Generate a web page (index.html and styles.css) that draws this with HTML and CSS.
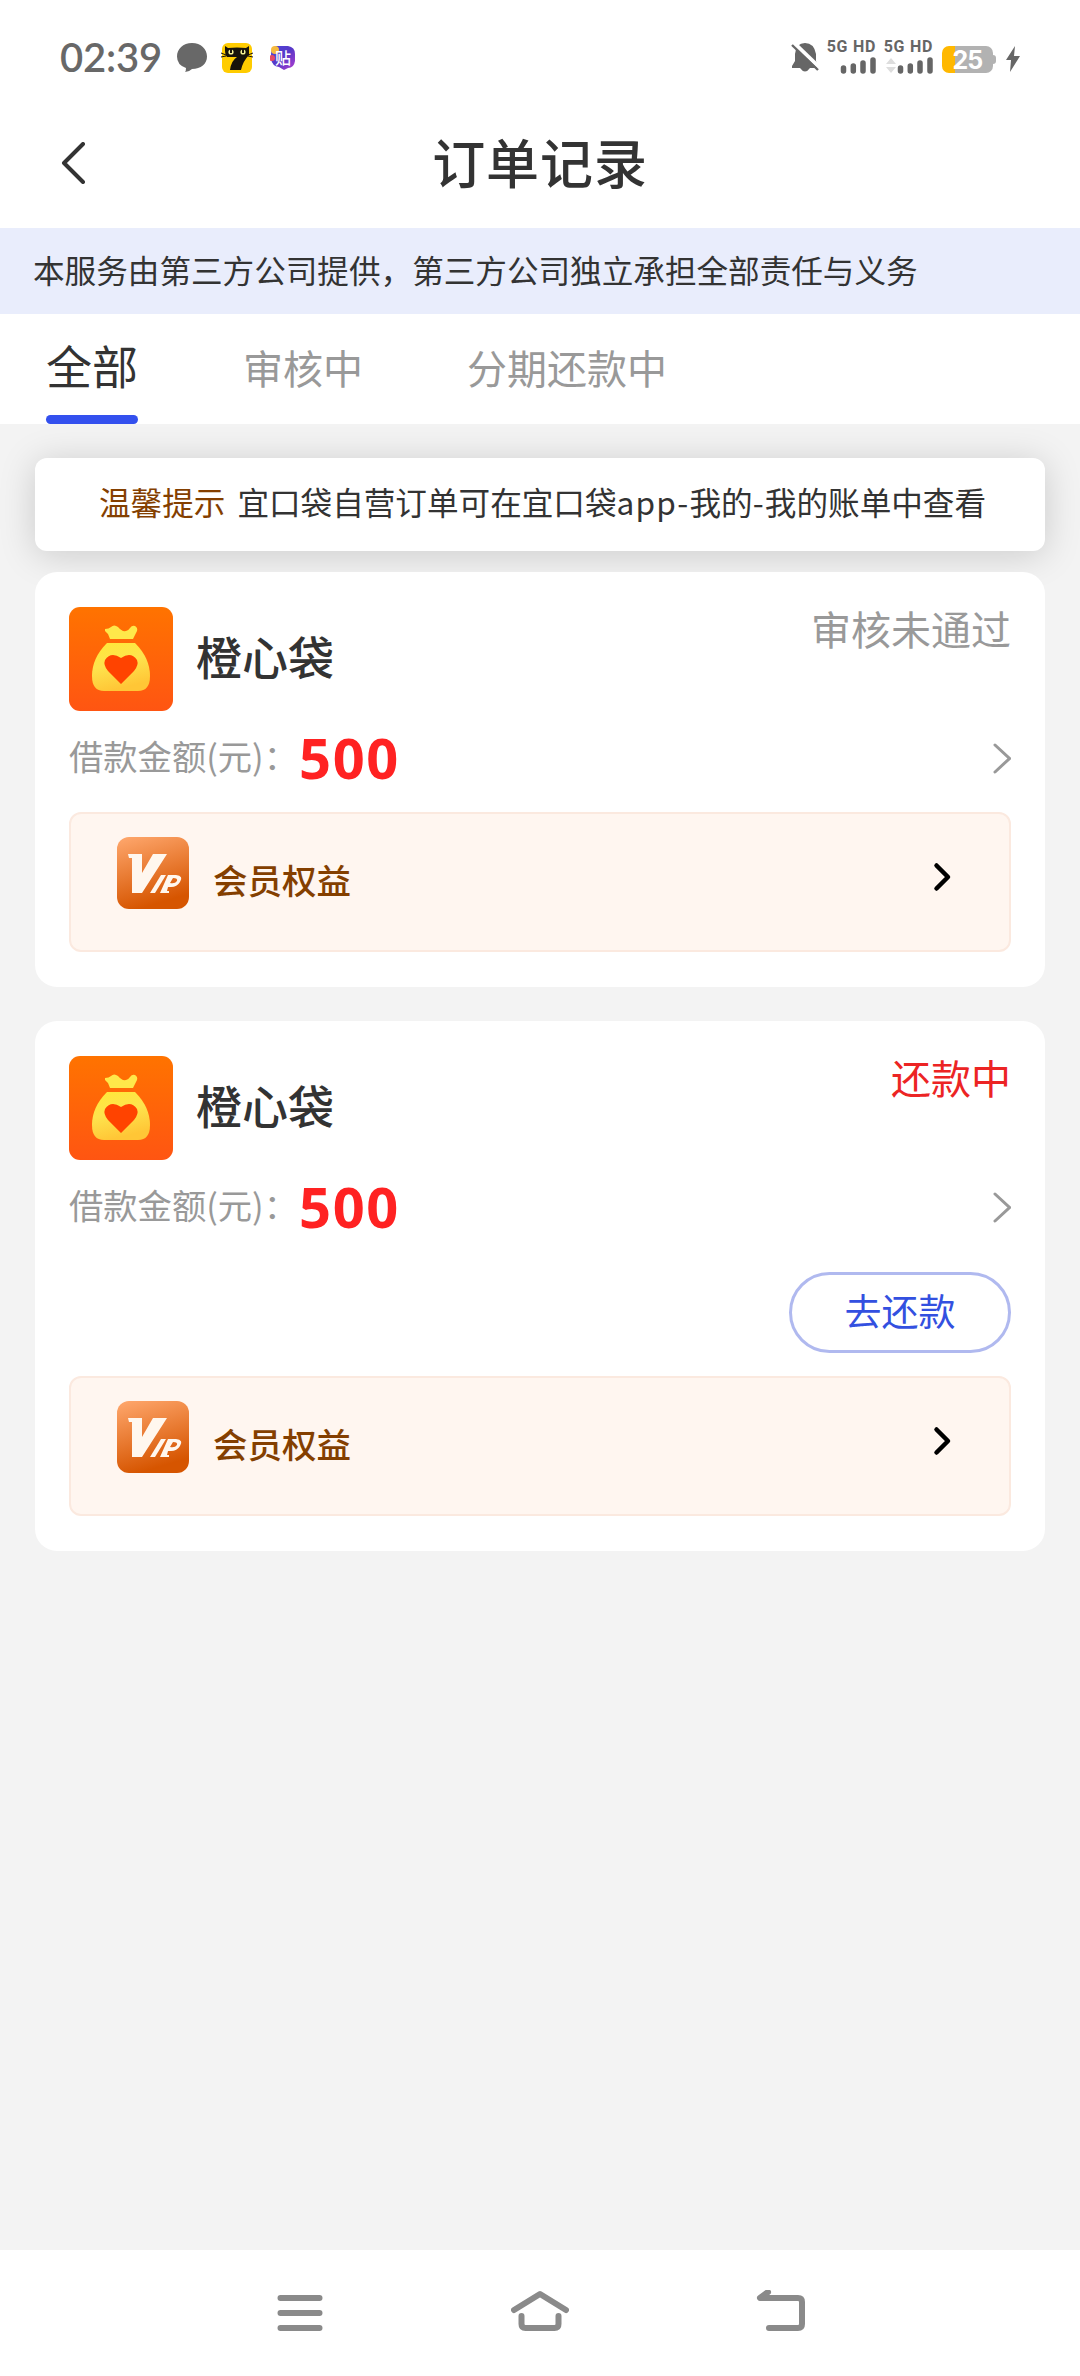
FILE: index.html
```html
<!DOCTYPE html>
<html lang="zh-CN">
<head>
<meta charset="utf-8">
<title>订单记录</title>
<link rel="stylesheet" href="styles.css">
</head>
<body>
<svg class="defs" width="0" height="0">
  <defs>
    <linearGradient id="orange" x1="0" y1="0" x2="0" y2="1"><stop offset="0" stop-color="#ff7300"/><stop offset="1" stop-color="#ff5512"/></linearGradient>
    <linearGradient id="gold" x1="0" y1="0" x2=".3" y2="1"><stop offset="0" stop-color="#ffe838"/><stop offset=".5" stop-color="#fee34d"/><stop offset="1" stop-color="#ffc636"/></linearGradient>
    <linearGradient id="copper" x1="0" y1="0" x2=".3" y2="1"><stop offset="0" stop-color="#ffa86e"/><stop offset="1" stop-color="#d65500"/></linearGradient>
    <linearGradient id="violet" x1="0" y1="0" x2="1" y2="1"><stop offset="0" stop-color="#4b45d8"/><stop offset=".5" stop-color="#5938c8"/><stop offset="1" stop-color="#b13fd0"/></linearGradient>
    <symbol id="bag" viewBox="0 0 104 104">
      <rect width="104" height="104" rx="11" fill="url(#orange)"/>
      <path d="M36 22q4 0 6-2 3-3 7 0 4 5 8 4 2 0 4-3 2-3 5-2 3 2 2 5l-4 8H41l-2-5-3-3z" fill="#ffe84a"/>
      <path d="M38 36h28q15 15 15 33 0 15-12 15H35q-12 0-12-15 0-18 15-33z" fill="url(#gold)"/>
      <path d="M52 77 39 64q-5-6-3-11 6-9 16-2 10-7 16 2 2 5-3 11z" fill="#ff4300"/>
    </symbol>
    <symbol id="vip" viewBox="0 0 72 72">
      <rect width="72" height="72" rx="12" fill="url(#copper)"/>
      <path d="M11 17h14v19l11-19h14L25 56H15V21h-3z" fill="#fff7ee"/>
      <path d="M44 38h5L38 56h-5z" fill="#fff7ee"/>
      <path d="M51 38h8q8 1 4 7-3 5-9 5h-3l-1 4h2v2h-9zM56 41l-3 5q5 1 7-2 1-3-4-3z" fill="#fff7ee" fill-rule="evenodd"/>
    </symbol>
  </defs>
</svg>
<div class="screen">
  <header class="status">
    <div class="status-left">
      <span class="clock">02:39</span>
      <svg class="bubble" width="30" height="30" viewBox="0 0 30 30"><path d="M15 0c9 0 15 6 15 13.500S24 26 15 26q-3 3-7 3 1-1 1-4Q0 22 0 13.500C0 6 6 0 15 0z" fill="#686868"/></svg>
      <svg class="cat" width="32" height="30" viewBox="0 0 32 30">
        <rect x="1" width="30" height="30" rx="6" fill="#fc0"/>
        <path d="M4 3l3 2q9-1 18 0l3-2v9q-6 6-8 15H9q1-9 7-13H6q-2-2-2-6z" fill="#17130a"/>
        <path d="M0 10l5 2M0 14l5-1M32 10l-5 2M32 14l-5-1" stroke="#17130a"/>
        <circle cx="10" cy="9" r="2.600" fill="#f3ef91"/><circle cx="22" cy="9" r="2.600" fill="#f3ef91"/>
        <path d="M10 6v4M22 6v4" stroke="#17130a" stroke-width="2"/>
      </svg>
      <span class="sticker">
        <svg width="26" height="26" viewBox="0 0 26 26"><path d="M6 1h12q7 1 7 8v7q-1 7-7 7l-4 2-5-3q-7-1-8-8V9q0-7 5-8z" fill="url(#violet)"/><circle cx="5" cy="5" r="4" fill="#f6bb3e"/><circle cx="2" cy="13" r="3" fill="#e54a66"/></svg>
        <span class="sticker-text">贴</span>
      </span>
    </div>
    <div class="status-right">
      <svg class="bell" width="28" height="32" viewBox="0 0 28 32"><path d="M4 12Q5 1 14 1t11 11v7l2 5v2h-8q-5 7-10 0H1v-2l3-5z" fill="#666"/><path d="M2 0l28 27" stroke="#fff" stroke-width="4"/><path d="M1 3l26 25" stroke="#666" stroke-width="2.400"/></svg>
      <div class="signal"><span>5G HD</span><svg width="36" height="17" viewBox="0 0 36 17"><path d="M3.500 11v3M13.300 9v5M23 6v8M33 3v11" stroke="#666" stroke-width="5.500" stroke-linecap="round"/></svg></div>
      <div class="signal"><span>5G HD</span><svg width="48" height="17" viewBox="0 0 48 17"><path d="M1 7l5-6 5 6zM1 10h10l-5 6z" fill="#ddd"/><path d="M15.500 11v3M25.300 9v5M35 6v8M45 3v11" stroke="#666" stroke-width="5.500" stroke-linecap="round"/></svg></div>
      <div class="battery"><span>25</span></div>
      <svg class="bolt" width="14" height="26" viewBox="0 0 14 26"><path d="M9 0 0 14h5L4 26l10-16H8z" fill="#666"/></svg>
    </div>
  </header>

  <nav class="titlebar">
    <svg class="back" width="25" height="42" viewBox="0 0 25 42"><path d="M22 2 3 21l19 19" fill="none" stroke="#333" stroke-width="4" stroke-linecap="round" stroke-linejoin="round"/></svg>
    <h1>订单记录</h1>
  </nav>

  <p class="banner">本服务由第三方公司提供，第三方公司独立承担全部责任与义务</p>

  <div class="tabs">
    <span class="tab active">全部</span>
    <span class="tab">审核中</span>
    <span class="tab">分期还款中</span>
  </div>

  <main>
    <div class="notice"><span class="tip">温馨提示</span><span>宜口袋自营订单可在宜口袋<span class="latin">app-</span>我的<span class="latin">-</span>我的账单中查看</span></div>

    <section class="card">
      <div class="card-head">
        <svg width="104" height="104"><use href="#bag"/></svg>
        <h2>橙心袋</h2>
        <span class="state">审核未通过</span>
      </div>
      <div class="amount">
        <span class="label">借款金额(元)：</span><b>500</b>
        <svg class="more" width="19" height="31" viewBox="0 0 19 31"><path d="M3 2 17.500 15.500 3 29" fill="none" stroke="#999" stroke-width="3" stroke-linecap="round"/></svg>
      </div>
      <div class="vip">
        <svg width="72" height="72"><use href="#vip"/></svg>
        <span>会员权益</span>
        <svg class="go" width="20" height="30" viewBox="0 0 20 30"><path d="M4.500 3.500 16 15 4.500 26.500" fill="none" stroke="#000" stroke-width="4.500" stroke-linecap="round" stroke-linejoin="round"/></svg>
      </div>
    </section>

    <section class="card">
      <div class="card-head">
        <svg width="104" height="104"><use href="#bag"/></svg>
        <h2>橙心袋</h2>
        <span class="state repaying">还款中</span>
      </div>
      <div class="amount">
        <span class="label">借款金额(元)：</span><b>500</b>
        <svg class="more" width="19" height="31" viewBox="0 0 19 31"><path d="M3 2 17.500 15.500 3 29" fill="none" stroke="#999" stroke-width="3" stroke-linecap="round"/></svg>
      </div>
      <button class="repay">去还款</button>
      <div class="vip">
        <svg width="72" height="72"><use href="#vip"/></svg>
        <span>会员权益</span>
        <svg class="go" width="20" height="30" viewBox="0 0 20 30"><path d="M4.500 3.500 16 15 4.500 26.500" fill="none" stroke="#000" stroke-width="4.500" stroke-linecap="round" stroke-linejoin="round"/></svg>
      </div>
    </section>
  </main>

  <footer class="navbar">
    <svg width="46" height="46" viewBox="0 0 46 46"><path d="M3.500 8h39M3.500 23h39M3.500 38h39"/></svg>
    <svg width="58" height="46" viewBox="0 0 58 46"><path d="M3 20 29 4l26 16M10.500 26v8q0 4 4 4h29q4 0 4-4v-8"/></svg>
    <svg width="50" height="46" viewBox="0 0 50 46"><path d="M12 2 4 8h38q4 0 4 4v22q0 4-4 4H13"/></svg>
  </footer>
</div>
</body>
</html>
```
FILE: styles.css
```css
* { box-sizing: border-box; }
body { margin: 0; background: #f3f3f3; color: #333; font-family: "Noto Sans CJK SC", sans-serif; }
h1, h2, p { margin: 0; }
svg { display: block; flex: none; }
.defs { position: absolute; }
.screen { width: 1080px; height: 2376px; display: flex; flex-direction: column; }

.status { height: 114px; background: #fff; display: flex; justify-content: space-between; padding: 0 60px; }
.status-left { display: flex; align-items: flex-start; padding-top: 43px; }
.clock { width: 117px; font: 600 40px/29px Lato, sans-serif; letter-spacing: -.2px; color: #686868; white-space: nowrap; }
.cat { margin-left: 14px; }
.sticker { position: relative; margin: 2px 0 0 17px; }
.sticker-text { position: absolute; left: 5px; top: 4px; font-size: 16px; line-height: 16px; font-weight: 500; color: #fff; }
.status-right { display: flex; align-items: flex-start; padding-top: 40px; color: #666; }
.bell { margin: 2px 9px 0 0; }
.signal { display: flex; flex-direction: column; align-items: flex-end; width: 48px; margin-right: 9px; font: 700 16px/14px Roboto, sans-serif; letter-spacing: .7px; white-space: nowrap; }
.signal svg { margin-top: 3px; }
.battery { position: relative; width: 51px; height: 27px; margin: 6px 13px 0 0; border-radius: 7px; background: linear-gradient(90deg, #ffb800 13px, #b2b2b2 13px); font: 700 25px/28px Inter, sans-serif; letter-spacing: -.8px; color: #fff; text-align: center; }
.battery::after { content: ""; position: absolute; right: -3px; top: 9px; width: 3px; height: 9px; border-radius: 0 3px 3px 0; background: #b2b2b2; }
.bolt { margin-top: 6px; }

.titlebar { position: relative; height: 114px; background: #fff; display: flex; justify-content: center; }
.titlebar h1 { font-size: 53px; line-height: 95px; font-weight: 500; letter-spacing: .9px; }
.back { position: absolute; left: 61px; top: 28px; }

.banner { height: 86px; padding-left: 33px; background: #e9edfc; font-size: 31.600px; line-height: 83px; }
.tabs { height: 110px; background: #fff; display: flex; padding-left: 46px; }
.tab { margin-right: 104px; font-size: 40px; line-height: 107px; color: #999; }
.tab.active { display: flex; flex-direction: column; height: 110px; margin-right: 105px; font-size: 46px; line-height: 101px; color: #333; }
.tab.active::after { content: ""; height: 9px; border-radius: 5px; background: #3350ee; }

main { flex: 1; padding: 34px 35px 0; }
.notice { height: 93px; padding-left: 64px; display: flex; gap: 12px; background: #fff; border-radius: 12px; box-shadow: 0 4px 36px rgba(0,0,0,.17); font-size: 31.600px; line-height: 87px; white-space: nowrap; }
.tip { color: #843f00; }
.latin { letter-spacing: 1.200px; }
.card { position: relative; margin: 21px 0 34px; padding: 35px 34px; background: #fff; border-radius: 22px; }
.card + .card { margin-top: 0; }
.card-head { display: flex; height: 104px; }
.card-head h2 { margin-left: 23px; font-size: 46px; line-height: 97px; font-weight: 500; }
.state { margin-left: auto; font-size: 40px; line-height: 42px; color: #999; }
.repaying { color: #ec2424; }
.amount { display: flex; align-items: center; height: 94px; margin-bottom: 7px; }
.label { width: 230px; font-size: 34.300px; line-height: 93px; padding-bottom: 5px; color: #999; white-space: nowrap; }
.amount b { font-family: "Noto Sans", sans-serif; font-size: 56px; letter-spacing: 1.600px; line-height: 92px; padding-bottom: 2px; color: #ff2222; }
.more { margin-left: auto; }
.repay { display: block; width: 222px; height: 81px; margin: 18px 0 23px auto; padding: 0 0 5px; border: 3px solid #b0b9ef; border-radius: 41px; background: #fff; color: #3350e0; font: 400 37px/68px "Noto Sans CJK SC", sans-serif; }
.vip { display: flex; height: 140px; padding: 23px 57px 0 46px; background: #fff6f0; border: 2px solid #fbe9df; border-radius: 12px; }
.vip span { margin-left: 24px; font-size: 34.500px; line-height: 84px; font-weight: 500; color: #843f00; }
.go { margin: 25px 0 0 auto; }

.navbar { height: 126px; background: #fff; display: flex; justify-content: space-between; padding: 40px 274px 0 277px; }
.navbar path { fill: none; stroke: #8a8a8a; stroke-width: 6; stroke-linecap: round; stroke-linejoin: round; }
```
